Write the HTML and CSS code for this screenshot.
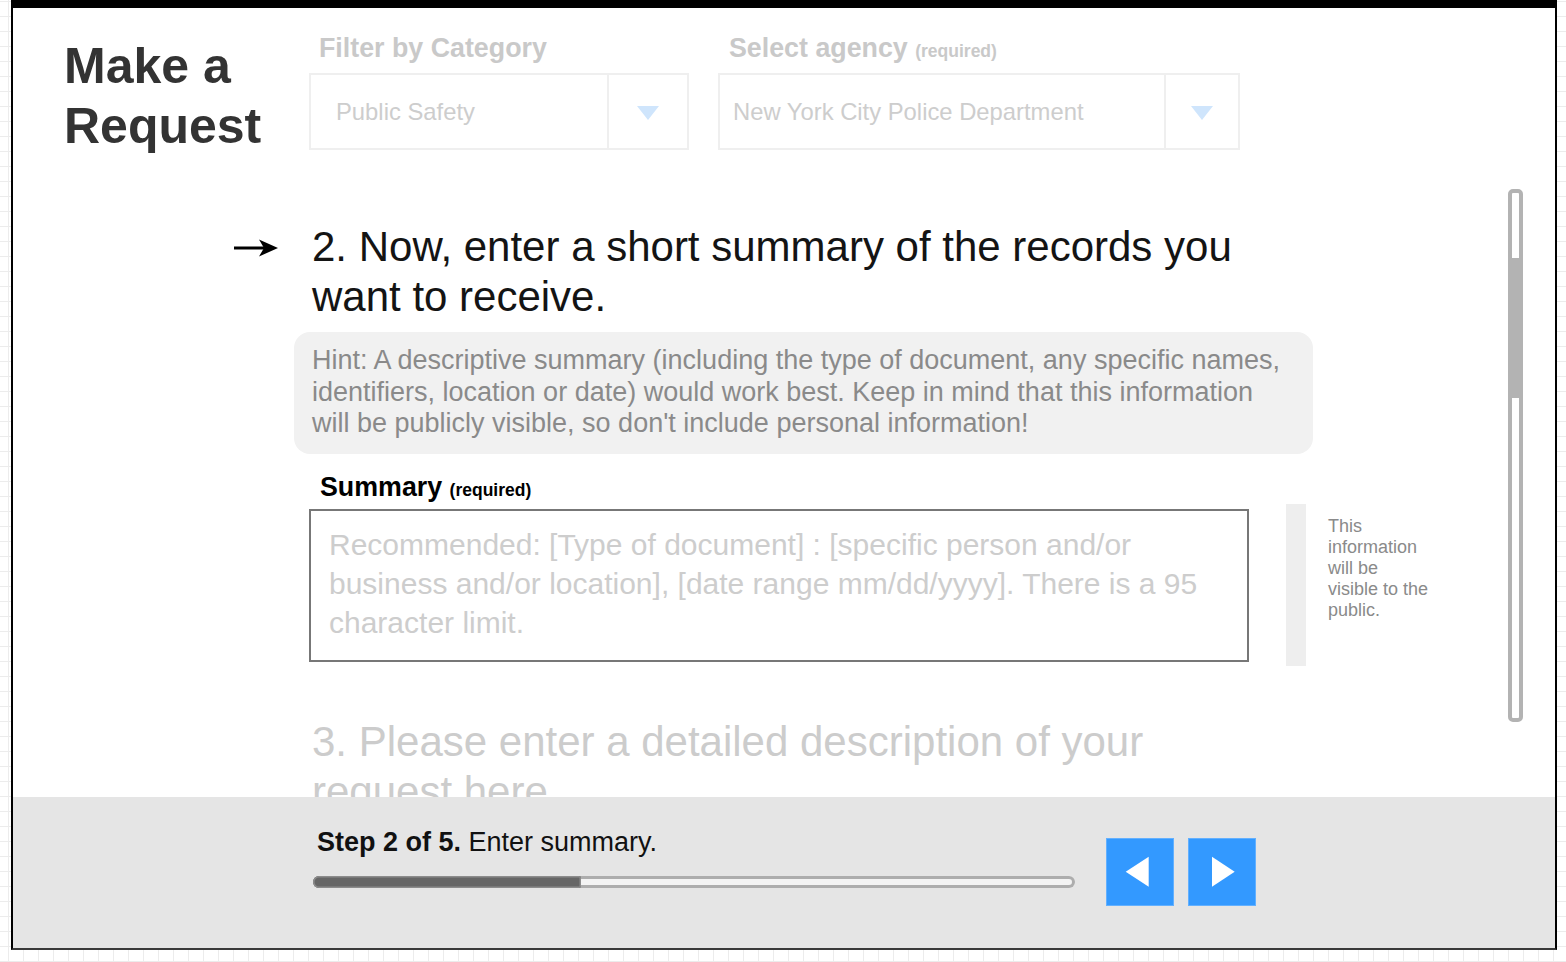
FILE: index.html
```html
<!DOCTYPE html>
<html lang="en">
<head>
<meta charset="utf-8">
<title>Make a Request</title>
<link rel="stylesheet" href="styles.css">
</head>
<body>
<div class="frame">
  <header class="page-header">
    <h1 class="page-title">Make a Request</h1>
    <div class="field field-category">
      <label class="field-label">Filter by Category</label>
      <div class="select">
        <span class="select-value">Public Safety</span>
        <span class="select-toggle"><svg width="22" height="14" viewBox="0 0 22 14"><polygon points="0,0 22,0 11,14" fill="#cfe5fc"/></svg></span>
      </div>
    </div>
    <div class="field field-agency">
      <label class="field-label">Select agency <small>(required)</small></label>
      <div class="select">
        <span class="select-value">New York City Police Department</span>
        <span class="select-toggle"><svg width="22" height="14" viewBox="0 0 22 14"><polygon points="0,0 22,0 11,14" fill="#cfe5fc"/></svg></span>
      </div>
    </div>
  </header>

  <main class="scroll-area">
    <div class="step-row">
      <svg class="step-arrow" width="44" height="20" viewBox="0 0 44 20">
        <line x1="0" y1="10" x2="32" y2="10" stroke="#000" stroke-width="3"/>
        <polygon points="25,1.5 44,10 25,18.5 30,10" fill="#000"/>
      </svg>
      <div class="step-column">
        <h2 class="step-title">2. Now, enter a short summary of the records you want to receive.</h2>
        <p class="hint">Hint: A descriptive summary (including the type of document, any specific names, identifiers, location or date) would work best. Keep in mind that this information will be publicly visible, so don't include personal information!</p>
        <div class="summary-row">
          <div class="summary-field">
            <label class="summary-label" for="summary">Summary <small>(required)</small></label>
            <textarea id="summary" class="summary-input" placeholder="Recommended: [Type of document] : [specific person and/or business and/or location], [date range mm/dd/yyyy]. There is a 95 character limit."></textarea>
          </div>
          <aside class="side-note">
            <span class="side-bar"></span>
            <p>This information will be visible to the public.</p>
          </aside>
        </div>
        <h2 class="step-title step-next">3. Please enter a detailed description of your request here</h2>
      </div>
    </div>
    <div class="scrollbar"><div class="scrollbar-thumb"></div></div>
  </main>

  <footer class="step-footer">
    <div class="progress-block">
      <p class="step-text"><strong>Step 2 of 5.</strong> Enter summary.</p>
      <div class="progress"><div class="progress-fill" style="width:268px"></div></div>
    </div>
    <div class="step-nav">
      <button class="nav-button" type="button" aria-label="Previous step">
        <svg width="66" height="66" viewBox="0 0 66 66"><polygon points="18.7,32.8 41.7,17.7 41.7,47.7" fill="#fff"/></svg>
      </button>
      <button class="nav-button" type="button" aria-label="Next step">
        <svg width="66" height="66" viewBox="0 0 66 66"><polygon points="23,17.7 45.7,32.8 23,47.7" fill="#fff"/></svg>
      </button>
    </div>
  </footer>
</div>
</body>
</html>
```

FILE: styles.css
```css
html, body {
  margin: 0;
  padding: 0;
}

body {
  background-color: #ffffff;
  background-image:
    linear-gradient(to bottom, #ececec 1px, transparent 1px),
    linear-gradient(to right, #ececec 1px, transparent 1px);
  background-size: 15px 15px;
  background-position: 8px 1px;
  font-family: "Liberation Sans", Arial, Helvetica, sans-serif;
  width: 1566px;
  height: 962px;
  overflow: hidden;
}

.frame {
  margin-left: 11px;
  width: 1546px;
  height: 950px;
  box-sizing: border-box;
  border: 2px solid #000;
  border-top: 8px solid #000;
  border-bottom: 2px solid #3a3a3a;
  background: #ffffff;
  display: flex;
  flex-direction: column;
  overflow: hidden;
}

/* Header */
.page-header {
  flex: none;
  height: 142px;
  box-sizing: border-box;
  padding: 25px 0 0 51px;
  display: flex;
  align-items: flex-start;
}

.page-title {
  margin: 3px 0 0;
  width: 245px;
  flex: none;
  font-size: 50px;
  line-height: 60px;
  font-weight: 700;
  color: #333333;
}

.field {
  flex: none;
}

.field-category {
  width: 380px;
}

.field-agency {
  width: 522px;
  margin-left: 29px;
}

.field-label {
  display: block;
  height: 30px;
  margin-bottom: 10px;
  padding-left: 10px;
  font-size: 26.8px;
  line-height: 30px;
  font-weight: 700;
  color: #c9c9c9;
  white-space: nowrap;
}

.field-agency .field-label {
  padding-left: 11px;
}

.field-label small {
  font-size: 17.5px;
  line-height: 1;
}

.select {
  height: 77px;
  box-sizing: border-box;
  border: 2px solid #efefef;
  display: flex;
  align-items: center;
}

.select-value {
  flex: 1;
  padding-left: 25px;
  font-size: 23.8px;
  color: #cdcdcd;
  white-space: nowrap;
}

.field-agency .select-value {
  padding-left: 13px;
}

.select-toggle {
  flex: none;
  width: 80px;
  align-self: stretch;
  box-sizing: border-box;
  border-left: 2px solid #efefef;
  display: flex;
  align-items: center;
  justify-content: center;
  padding-top: 2px;
}

.field-agency .select-toggle {
  width: 74px;
}

/* Scroll area */
.scroll-area {
  flex: 1;
  position: relative;
  overflow: hidden;
  padding-top: 72px;
  box-sizing: border-box;
}

.step-row {
  display: flex;
  align-items: flex-start;
  padding-left: 221px;
}

.step-arrow {
  flex: none;
  margin-top: 16px;
}

.step-column {
  flex: none;
  width: 1019px;
  margin-left: 16px;
}

.step-title {
  margin: 0;
  padding: 0 41px 0 18px;
  font-size: 42px;
  line-height: 50px;
  font-weight: 400;
  color: #141414;
}

.hint {
  margin: 10px 0 0;
  padding: 13px 24px 14px 18px;
  background: #f1f1f1;
  border-radius: 16px;
  font-size: 27px;
  line-height: 31.5px;
  color: #8a8a8a;
}

.summary-row {
  display: flex;
  align-items: flex-start;
  margin-top: 18px;
  padding-left: 15px;
}

.summary-field {
  flex: none;
}

.summary-label {
  display: block;
  height: 30px;
  margin-bottom: 7px;
  padding-left: 11px;
  font-size: 26.8px;
  line-height: 30px;
  font-weight: 700;
  color: #000000;
}

.summary-label small {
  font-size: 17.5px;
  line-height: 1;
}

.summary-input {
  display: block;
  width: 940px;
  height: 153px;
  box-sizing: border-box;
  margin: 0;
  padding: 14px 18px 10px;
  border: 2px solid #777777;
  border-radius: 0;
  background: #ffffff;
  font-family: "Liberation Sans", Arial, Helvetica, sans-serif;
  font-size: 30px;
  line-height: 39px;
  color: #333;
  resize: none;
  overflow: hidden;
  outline: none;
}

.summary-input::placeholder {
  color: #cdcdcd;
  opacity: 1;
}

.side-note {
  flex: none;
  display: flex;
  height: 162px;
  margin-left: 37px;
  margin-top: 32px;
}

.side-bar {
  width: 20px;
  background: #eeeeee;
}

.side-note p {
  margin: 0 0 0 22px;
  padding-top: 12px;
  width: 103px;
  font-size: 18px;
  line-height: 21px;
  color: #8a8a8a;
}

.step-next {
  margin-top: 51px;
  color: #cccccc;
}

/* Scrollbar */
.scrollbar {
  position: absolute;
  left: 1495px;
  top: 39px;
  width: 15px;
  height: 533px;
  box-sizing: border-box;
  border: 4px solid #b3b3b3;
  border-radius: 5px;
  background: #ffffff;
}

.scrollbar-thumb {
  margin: 65px -4px 0;
  height: 140px;
  background: #b3b3b3;
}

/* Footer */
.step-footer {
  flex: none;
  height: 151px;
  box-sizing: border-box;
  padding: 30px 0 0 300px;
  background: #e5e5e5;
  display: flex;
  align-items: flex-start;
}

.progress-block {
  flex: none;
  width: 762px;
}

.step-text {
  margin: 0;
  padding-left: 4px;
  font-size: 27px;
  line-height: 30px;
  color: #111111;
}

.step-text strong {
  font-weight: 700;
}

.progress {
  margin-top: 19px;
  height: 12px;
  border-radius: 6px;
  background: #f3f3f3;
  box-shadow: inset 0 0 0 3px #adadad;
  display: flex;
}

.progress-fill {
  height: 12px;
  border-radius: 6px 2px 2px 6px;
  background: #666666;
  box-shadow: inset 0 0 0 1.5px #8c8c8c;
}

.step-nav {
  flex: none;
  display: flex;
  gap: 14px;
  margin-left: 31px;
  margin-top: 11px;
}

.nav-button {
  width: 68px;
  height: 68px;
  box-sizing: border-box;
  margin: 0;
  padding: 0;
  border: 1px solid #62b0ff;
  background: #3399ff;
  display: flex;
  align-items: center;
  justify-content: center;
  cursor: pointer;
}

.nav-button svg {
  display: block;
}
```
